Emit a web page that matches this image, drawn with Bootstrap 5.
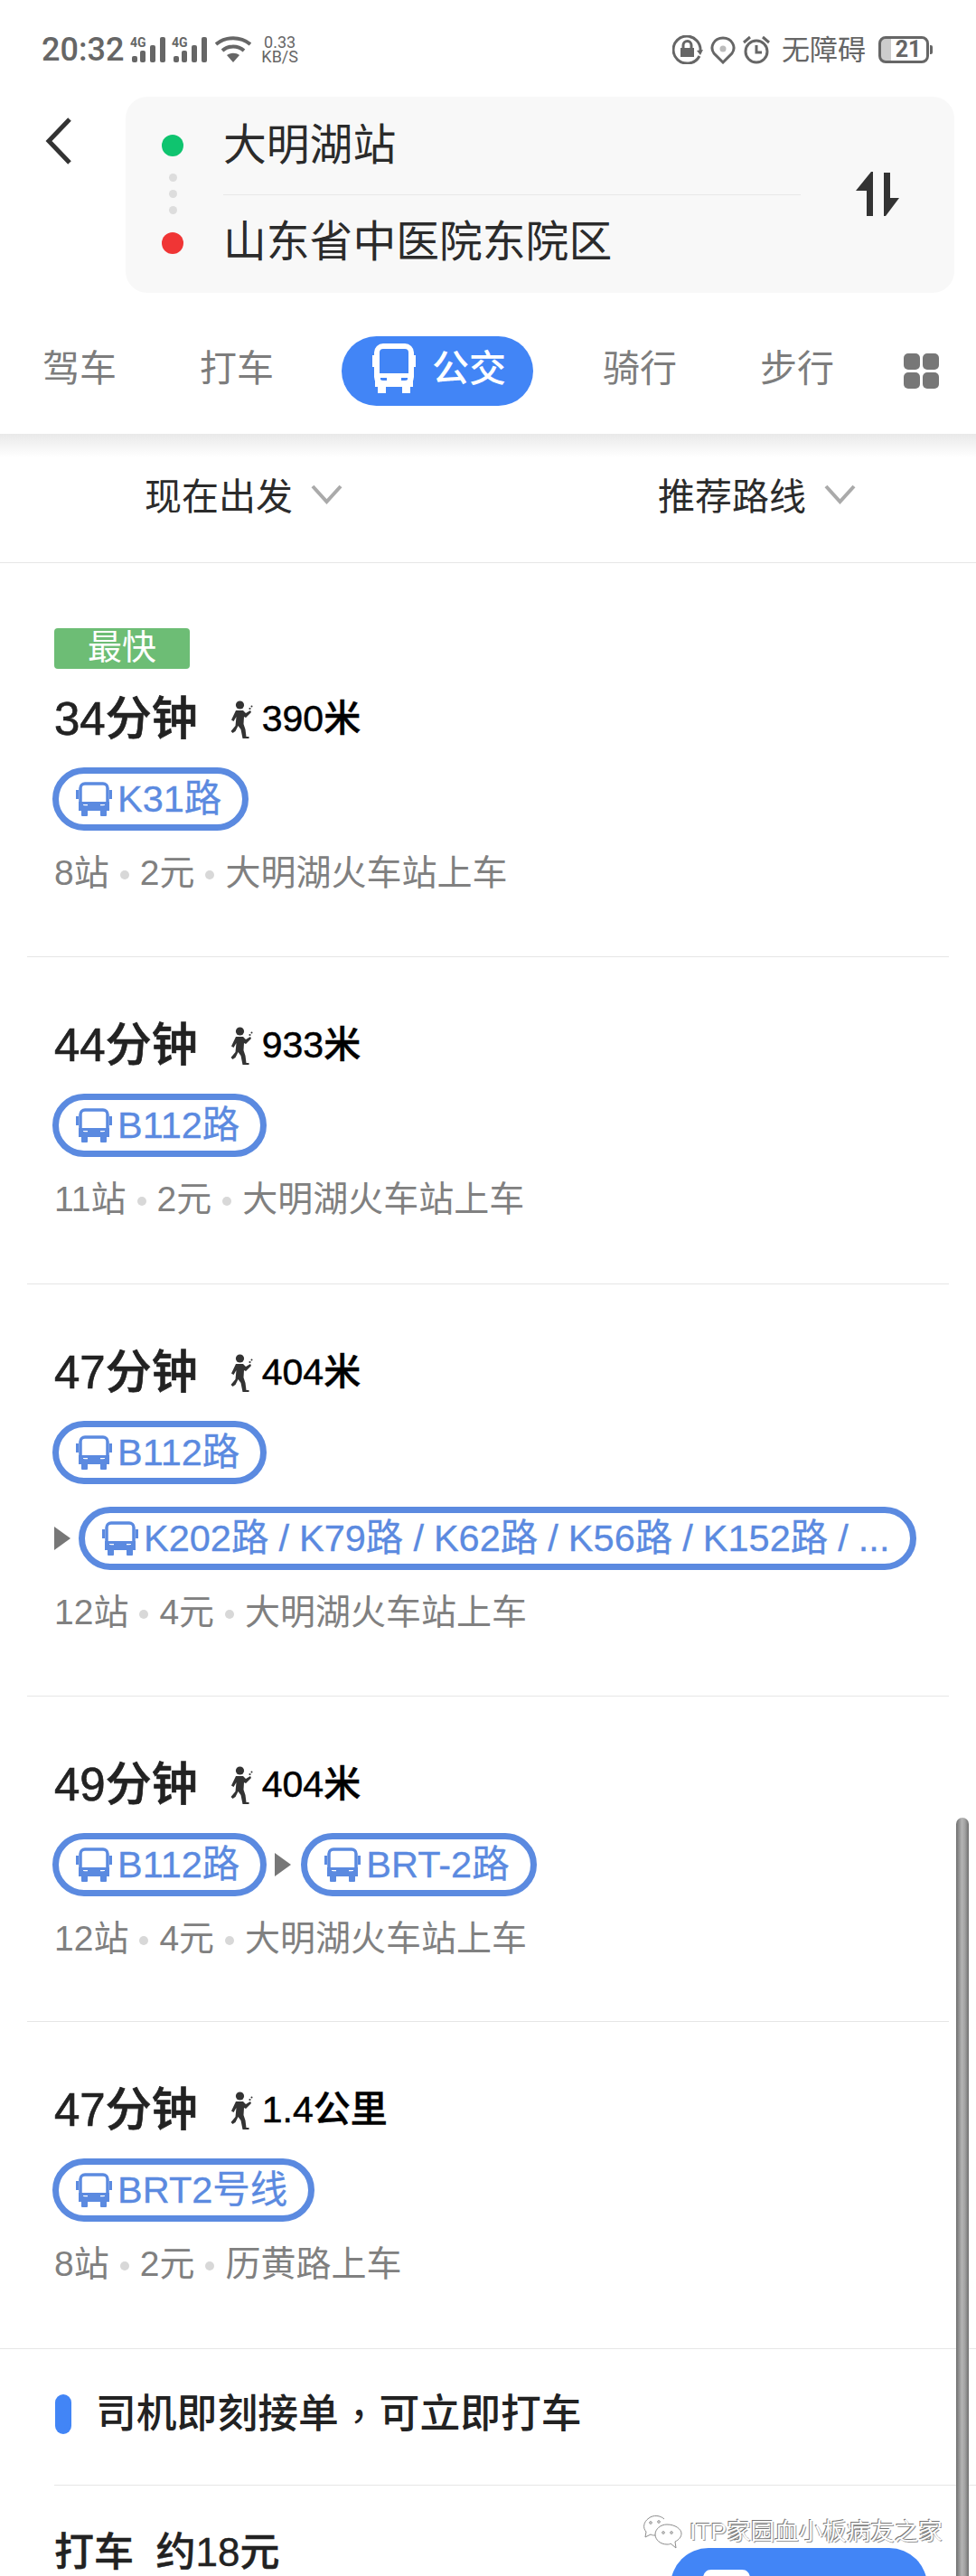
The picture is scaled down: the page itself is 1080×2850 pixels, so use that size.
<!DOCTYPE html>
<html lang="zh-CN">
<head>
<meta charset="UTF-8">
<title>公交路线</title>
<link href="https://cdn.jsdelivr.net/npm/bootstrap@5.3.3/dist/css/bootstrap.min.css" rel="stylesheet">
<style>
html, body { height: 2850px; overflow: hidden; }
body { position: relative; background: #fff; font-family: "Liberation Sans", "Noto Sans CJK SC", sans-serif; color: #222; }
.status-row { height: 107px; padding: 3px 48px 0 46px; color: #666; font-family: Roboto, "Noto Sans CJK SC", sans-serif; }
.status-time { font-size: 36px; font-weight: 500; line-height: 1; margin-right: 7px; }
.status-speed { font-size: 18px; line-height: 16px; margin-left: 11px; }
.status-text { font-size: 31px; line-height: 1; margin: 0 14px 0 13px; }
.status-battery { width: 56px; height: 30px; border: 3px solid #666; border-radius: 8px; font-size: 25px; font-weight: 700; line-height: 24px; text-align: center; padding-left: 10px; background: linear-gradient(90deg, #ccc 11px, transparent 11px); background-origin: padding-box; }
.status-nub { width: 3px; height: 10px; background: #666; border-radius: 0 2px 2px 0; margin-left: 1px; }
.signal-icon { overflow: visible; }
.signal-next { margin-left: 6px; }
.back-cell { width: 139px; padding: 23px 0 0 49px; }
.search-box { width: 917px; height: 217px; background: #f8f8f8; border-radius: 24px; }
.dot-col { width: 24px; margin-left: 40px; padding-top: 42px; gap: 9px; }
.dot-big { width: 24px; height: 24px; border-radius: 50%; }
.dot-green { background: #0fc46f; margin-bottom: 10px; }
.dot-red { background: #f03535; margin-top: 11px; }
.dot-small { width: 9px; height: 9px; border-radius: 50%; background: #ddd; }
.place-col { width: 639px; margin-left: 44px; font-size: 47.8px; color: #2b2b2b; }
.place-row { height: 108px; }
.place-row + .place-row { border-top: 1px solid #e8e8e8; padding-bottom: 4px; }
.swap-icon { margin: 83px 0 0 61px; }
.mode-row { height: 156px; padding: 48px 0 0 47px; gap: 77px; font-size: 41px; color: #7d7d7d; }
.mode-item { height: 77px; line-height: 72px; }
.mode-wide { margin-right: 15px; }
.mode-active { width: 212px; margin-left: -2px; background: #4285f6; color: #fff; border-radius: 39px; padding-left: 34px; gap: 18px; font-weight: 500; }
.mode-grid { display: grid; grid-template-columns: 18px 18px; gap: 3px; margin: 19px 0 0 0; height: 39px; }
.mode-grid i { background: #777; border-radius: 5px; }
.filter-row { height: 143px; border-bottom: 1px solid #e6e6e6; font-size: 41px; color: #2b2b2b; background: linear-gradient(#e9e9e9, #fff 26px); }
.filter-cell { padding-top: 40px; height: 100px; gap: 20px; }
.filter-left { padding-left: 160px; }
.filter-right { padding-left: 188px; }
.route-item { margin: 0 30px; padding: 67px 0 68px 30px; border-bottom: 1px solid #e6e6e6; }
.route-first { padding-top: 72px; padding-bottom: 67px; }
.route-transfer { padding-bottom: 67px; }
.route-short { padding-bottom: 66px; }
.route-last { margin: 0; padding-left: 60px; }
.route-tag { width: 150px; height: 45px; line-height: 43px; background: #6dbd75; color: #fff; font-size: 38px; text-align: center; border-radius: 4px; margin-bottom: 25px; }
.route-head { height: 60px; padding-top: 2px; }
.route-time { font-size: 51px; font-weight: 500; color: #222; margin-right: 34px; -webkit-text-stroke: .7px #222; }
.route-walk { font-size: 41px; font-weight: 500; color: #000; margin-left: 9px; -webkit-text-stroke: .5px #000; }
.line-row { margin: 24px 0 0 -2px; }
.line-row + .line-row { margin-top: 25px; }
.line-pill { height: 70px; border: 7px solid #5b8ae0; border-radius: 35px; color: #5b8ae0; font-size: 41.5px; padding: 0 23px 0 19px; gap: 6px; white-space: nowrap; word-spacing: -.5px; -webkit-text-stroke: .3px #5b8ae0; }
.line-bus { width: 40px; height: 38px; flex: none; }
.line-arrow { width: 0; height: 0; border-left: 18px solid #777; border-top: 13px solid transparent; border-bottom: 13px solid transparent; margin: 0 11px 0 9px; }
.line-arrow-lead { margin: 0 9px 0 2px; }
.route-meta { height: 50px; margin-top: 22px; font-size: 39px; line-height: 50px; color: #808080; }
.meta-dot { display: inline-block; width: 10px; height: 10px; border-radius: 50%; background: #d8d8d8; margin: 0 12px; vertical-align: 6px; }
.notice-row { height: 151px; margin-left: 60px; padding-bottom: 6px; border-bottom: 1px solid #e6e6e6; font-size: 44.8px; font-weight: 500; color: #222; }
.notice-bar { width: 18px; height: 44px; background: #4285f6; border-radius: 9px; margin: 0 27px 0 1px; }
.notice-comma { font-family: "Noto Sans CJK TC", sans-serif; font-weight: 400; }
.taxi-row { padding: 0 54px 0 60px; }
.taxi-price { padding-top: 46px; font-size: 44px; font-weight: 500; line-height: 56px; color: #222; -webkit-text-stroke: .4px #222; }
.taxi-btn { width: 284px; height: 90px; margin-top: 69px; background: #4285f6; color: #fff; border-radius: 42px; font-size: 39px; gap: 28px; padding: 24px 0 0 33px; }
.scroll-thumb { left: 1058px; top: 2011px; width: 14px; height: 839px; border-radius: 7px 7px 0 0; background: linear-gradient(90deg, #6f6f6f, #b4b4b4 45%, #a2a2a2 70%, #6f6f6f); }
.mark-wrap { left: 711px; top: 2782px; gap: 8px; }
.mark-text { font-size: 26.5px; line-height: 1; color: #fff; text-shadow: -1px -1px 0 #777, 1px 1px 0 #999; white-space: nowrap; }
</style>
</head>
<body>
<svg width="0" height="0" class="position-absolute">
    <symbol id="bus" viewBox="0 0 40 38">
        <rect x="0" y="9" width="3" height="10" fill="currentColor"/>
        <rect x="37" y="9" width="3" height="10" fill="currentColor"/>
        <rect x="5" y="2" width="30" height="26" rx="5" fill="none" stroke="currentColor" stroke-width="3.500"/>
        <path fill-rule="evenodd" fill="currentColor" d="M3 22h34v10H3z M8 25v3h5v-3z M27 25v3h5v-3z"/>
        <rect x="6" y="31" width="7" height="7" rx="1" fill="currentColor"/>
        <rect x="27" y="31" width="7" height="7" rx="1" fill="currentColor"/>
    </symbol>
    <symbol id="walker" viewBox="0 0 28 42">
        <circle cx="12.500" cy="5" r="4.600" fill="#333"/>
        <path fill="#333" d="M8 11h8l3 3 5-3 1 2-6 6-2-1-.5 8 2 6 1 8h3v2h-7l-2-10-3-4-3 6-3 2-2-2 5-6 1-10-3 5-2.500-1.500z"/>
        <circle cx="23.500" cy="9" r="1.100" fill="#333"/>
        <circle cx="25.500" cy="6.500" r="1" fill="#333"/>
    </symbol>
</svg>

<!-- status bar -->
<div class="status-row d-flex align-items-center">
    <span class="status-time">20:32</span>
    <svg class="signal-icon" width="40" height="30" viewBox="0 0 40 30" fill="#666"><text x="0" y="12" font-size="14" font-weight="700" font-family="Roboto">4G</text><rect x="2" y="22" width="6" height="7" rx="2"/><rect x="11" y="16" width="6" height="13" rx="2"/><rect x="22" y="10" width="6" height="19" rx="2"/><rect x="33" y="1" width="6" height="28" rx="2"/></svg>
    <svg class="signal-icon signal-next" width="40" height="30" viewBox="0 0 40 30" fill="#666"><text x="0" y="12" font-size="14" font-weight="700" font-family="Roboto">4G</text><rect x="2" y="22" width="6" height="7" rx="2"/><rect x="11" y="16" width="6" height="13" rx="2"/><rect x="22" y="10" width="6" height="19" rx="2"/><rect x="33" y="1" width="6" height="28" rx="2"/></svg>
    <svg class="ms-2" width="40" height="30" viewBox="0 0 40 30" fill="none" stroke="#666" stroke-width="4"><path d="M1 9c11-9 27-9 38 0"/><path d="M8 16c7-6 17-6 24 0"/><path fill="#666" stroke="none" d="M13 21c4-3 10-3 14 0l-7 8z"/></svg>
    <div class="status-speed text-center">0.33<br>KB/S</div>
    <div class="ms-auto d-flex align-items-center">
        <svg width="34" height="32" viewBox="0 0 34 32" fill="none" stroke="#666" stroke-width="3"><path d="M31 17A15 15 0 1 0 17 31"/><path d="M17 31a15 15 0 0 0 13-8"/><rect x="9" y="14" width="15" height="10" fill="#666" stroke="none"/><path d="M12 14v-3a4.500 4.500 0 0 1 9 0v3"/><path d="M27 17l7-1-3 6z" fill="#666" stroke="none"/></svg>
        <svg class="ms-2" width="28" height="31" viewBox="0 0 28 31" fill="none" stroke="#666" stroke-width="3"><path d="M14 29L4 19C-1 12 4 2 14 2s15 10 10 17z"/><circle cx="14" cy="14" r="3.500" fill="#bbb" stroke="none"/></svg>
        <svg class="ms-2" width="30" height="32" viewBox="0 0 30 32" fill="none" stroke="#666" stroke-width="3"><circle cx="15" cy="18" r="12"/><path d="M15 11v8h6"/><path d="M1 8l7-6M29 8l-7-6"/></svg>
        <span class="status-text">无障碍</span>
        <div class="status-battery">21</div>
        <div class="status-nub"></div>
    </div>
</div>

<!-- from / to -->
<div class="d-flex">
    <div class="back-cell">
        <svg width="32" height="52" viewBox="0 0 32 52" fill="none" stroke="#333" stroke-width="5"><path d="M28 2L5 26l23 24"/></svg>
    </div>
    <div class="search-box d-flex">
        <div class="dot-col d-flex flex-column align-items-center">
            <div class="dot-big dot-green"></div>
            <div class="dot-small"></div>
            <div class="dot-small"></div>
            <div class="dot-small"></div>
            <div class="dot-big dot-red"></div>
        </div>
        <div class="place-col">
            <div class="place-row d-flex align-items-center">大明湖站</div>
            <div class="place-row d-flex align-items-center">山东省中医院东院区</div>
        </div>
        <svg class="swap-icon" width="48" height="50" viewBox="0 0 48 50" fill="#333"><path d="M17 0h2v49h-7V21H0z"/><path d="M31 1h7v28h10L33 49h-2z"/></svg>
    </div>
</div>

<!-- travel modes -->
<div class="mode-row d-flex">
    <div class="mode-item mode-wide">驾车</div>
    <div class="mode-item">打车</div>
    <div class="mode-item mode-active d-flex">
        <svg class="mt-2" width="48" height="56" viewBox="0 0 48 56"><path fill="#fff" d="M0 13h3v13H0zM45 13h3v13h-3z"/><rect x="5" y="3" width="38" height="41" rx="7" fill="none" stroke="#fff" stroke-width="6"/><path fill="#fff" fill-rule="evenodd" d="M3 33h42v15H3z M9 38v4h7v-4z M32 38v4h7v-4z"/><path fill="#fff" d="M6 47h9v8H6zM33 47h9v8h-9z"/></svg>
        公交
    </div>
    <div class="mode-item mode-wide">骑行</div>
    <div class="mode-item">步行</div>
    <div class="mode-grid"><i></i><i></i><i></i><i></i></div>
</div>

<!-- filters -->
<div class="filter-row row g-0">
    <div class="col-6 filter-cell filter-left d-flex">
        现在出发
        <svg class="mt-3" width="35" height="22" viewBox="0 0 35 22" fill="none" stroke="#aaa" stroke-width="4"><path d="M2 2l15.500 17L33 2"/></svg>
    </div>
    <div class="col-6 filter-cell filter-right d-flex">
        推荐路线
        <svg class="mt-3" width="35" height="22" viewBox="0 0 35 22" fill="none" stroke="#aaa" stroke-width="4"><path d="M2 2l15.500 17L33 2"/></svg>
    </div>
</div>

<!-- routes -->
<div class="route-item route-first">
    <div class="route-tag">最快</div>
    <div class="route-head d-flex align-items-center">
        <span class="route-time">34分钟</span>
        <svg width="28" height="42"><use href="#walker"/></svg>
        <span class="route-walk">390米</span>
    </div>
    <div class="line-row d-flex align-items-center">
        <div class="line-pill d-inline-flex align-items-center"><svg class="line-bus"><use href="#bus"/></svg>K31路</div>
    </div>
    <div class="route-meta">8站<i class="meta-dot"></i>2元<i class="meta-dot"></i>大明湖火车站上车</div>
</div>

<div class="route-item">
    <div class="route-head d-flex align-items-center">
        <span class="route-time">44分钟</span>
        <svg width="28" height="42"><use href="#walker"/></svg>
        <span class="route-walk">933米</span>
    </div>
    <div class="line-row d-flex align-items-center">
        <div class="line-pill d-inline-flex align-items-center"><svg class="line-bus"><use href="#bus"/></svg>B112路</div>
    </div>
    <div class="route-meta">11站<i class="meta-dot"></i>2元<i class="meta-dot"></i>大明湖火车站上车</div>
</div>

<div class="route-item route-transfer">
    <div class="route-head d-flex align-items-center">
        <span class="route-time">47分钟</span>
        <svg width="28" height="42"><use href="#walker"/></svg>
        <span class="route-walk">404米</span>
    </div>
    <div class="line-row d-flex align-items-center">
        <div class="line-pill d-inline-flex align-items-center"><svg class="line-bus"><use href="#bus"/></svg>B112路</div>
    </div>
    <div class="line-row d-flex align-items-center">
        <i class="line-arrow line-arrow-lead"></i>
        <div class="line-pill d-inline-flex align-items-center"><svg class="line-bus"><use href="#bus"/></svg>K202路 / K79路 / K62路 / K56路 / K152路 / ...</div>
    </div>
    <div class="route-meta">12站<i class="meta-dot"></i>4元<i class="meta-dot"></i>大明湖火车站上车</div>
</div>

<div class="route-item route-short">
    <div class="route-head d-flex align-items-center">
        <span class="route-time">49分钟</span>
        <svg width="28" height="42"><use href="#walker"/></svg>
        <span class="route-walk">404米</span>
    </div>
    <div class="line-row d-flex align-items-center">
        <div class="line-pill d-inline-flex align-items-center"><svg class="line-bus"><use href="#bus"/></svg>B112路</div>
        <i class="line-arrow"></i>
        <div class="line-pill d-inline-flex align-items-center"><svg class="line-bus"><use href="#bus"/></svg>BRT-2路</div>
    </div>
    <div class="route-meta">12站<i class="meta-dot"></i>4元<i class="meta-dot"></i>大明湖火车站上车</div>
</div>

<div class="route-item route-last">
    <div class="route-head d-flex align-items-center">
        <span class="route-time">47分钟</span>
        <svg width="28" height="42"><use href="#walker"/></svg>
        <span class="route-walk">1.4公里</span>
    </div>
    <div class="line-row d-flex align-items-center">
        <div class="line-pill d-inline-flex align-items-center"><svg class="line-bus"><use href="#bus"/></svg>BRT2号线</div>
    </div>
    <div class="route-meta">8站<i class="meta-dot"></i>2元<i class="meta-dot"></i>历黄路上车</div>
</div>

<!-- taxi -->
<div class="notice-row d-flex align-items-center">
    <i class="notice-bar"></i>司机即刻接单<span class="notice-comma">，</span>可立即打车
</div>
<div class="taxi-row d-flex justify-content-between">
    <div class="taxi-price">打车&nbsp;&nbsp;约18元</div>
    <div class="taxi-btn d-flex">
        <svg width="58" height="50" viewBox="0 0 58 50"><path fill="#fff" d="M12 0h34c6 0 8 4 9 8l3 42H0L3 8c1-4 3-8 9-8z"/></svg>
        去打车
    </div>
</div>

<!-- things lying over the page -->
<div class="scroll-thumb position-absolute"></div>
<div class="mark-wrap position-absolute d-flex align-items-center">
    <svg width="44" height="38" viewBox="0 0 44 38" fill="none" stroke="#8c8c8c" stroke-width="1"><path d="M24 5C20 1 12 0 7 4 1 8 0 15 4 19l-1 6 6-3c2 1 3 1 5 1"/><path d="M27 11c-7 0-13 5-13 11s6 11 13 11c2 0 3 0 4-1l6 5-1-7c4-2 7-5 7-9 0-5-7-10-16-10z"/><circle cx="9" cy="9" r="1.300"/><circle cx="18" cy="8" r="1.300"/><circle cx="23" cy="20" r="1.300"/><circle cx="32" cy="20" r="1.300"/></svg>
    <span class="mark-text">ITP家园血小板病友之家</span>
</div>

<script src="https://cdn.jsdelivr.net/npm/bootstrap@5.3.3/dist/js/bootstrap.bundle.min.js"></script>
</body>
</html>
